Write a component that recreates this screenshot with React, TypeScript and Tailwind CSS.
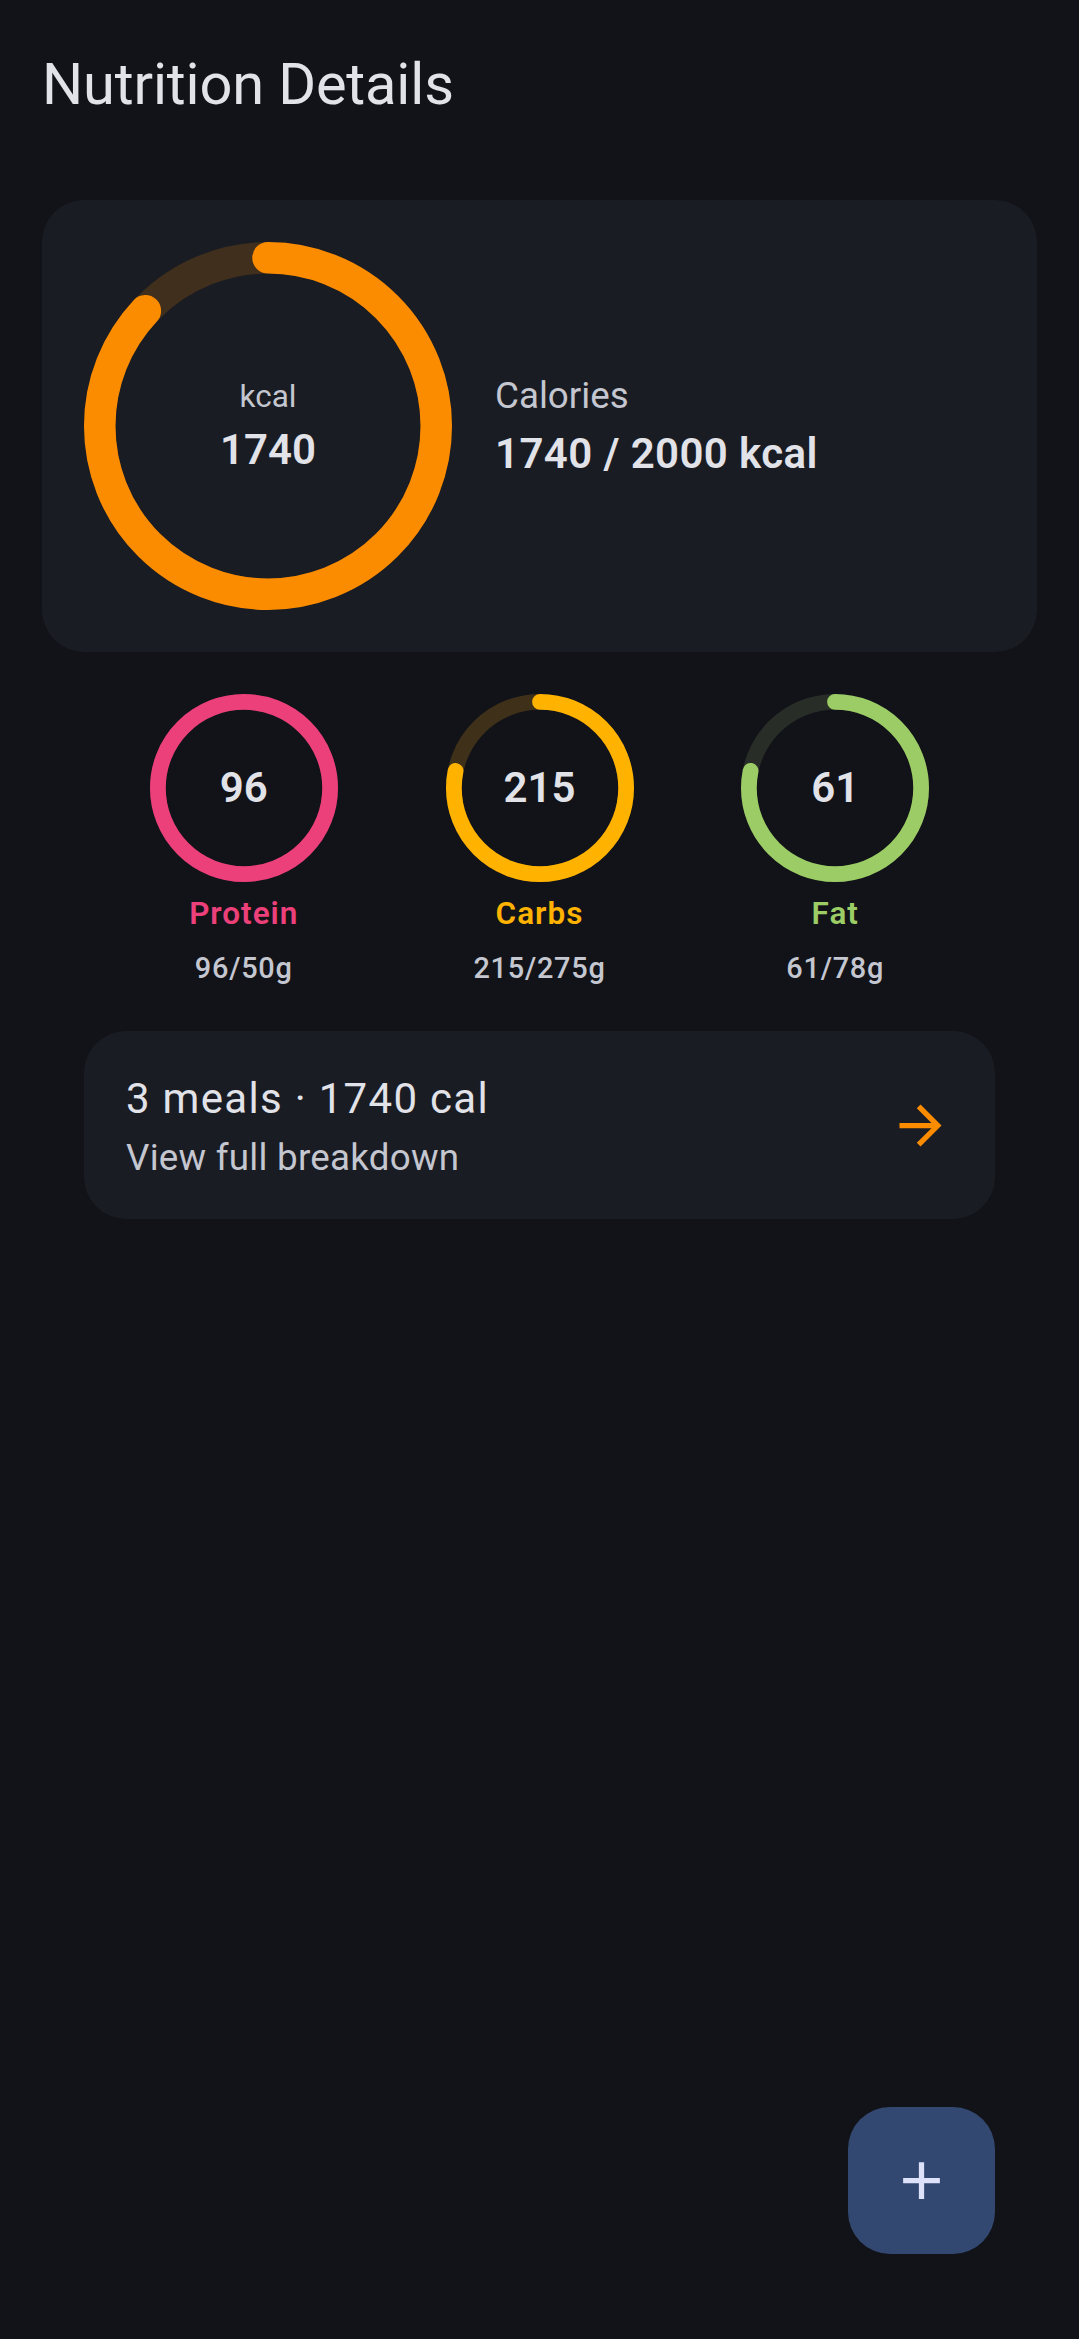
import React from "react";

type RingProps = {
  size: number;
  stroke: number;
  progress: number;
  color: string;
  track: string;
  children?: React.ReactNode;
};

function Ring({ size, stroke, progress, color, track, children }: RingProps) {
  const r = (size - stroke) / 2;
  const p = Math.min(progress, 1);
  return (
    <div className="relative shrink-0" style={{ width: size, height: size }}>
      <svg width={size} height={size} viewBox={`0 0 ${size} ${size}`} className="-rotate-90">
        <circle cx={size / 2} cy={size / 2} r={r} fill="none" stroke={track} strokeWidth={stroke} />
        <circle
          cx={size / 2}
          cy={size / 2}
          r={r}
          fill="none"
          stroke={color}
          strokeWidth={stroke}
          strokeLinecap={p >= 1 ? "butt" : "round"}
          pathLength={100}
          strokeDasharray={`${p * 100} 100`}
        />
      </svg>
      <div className="absolute inset-0 flex flex-col items-center justify-center">{children}</div>
    </div>
  );
}

const macros = [
  { name: "Protein", value: 96, goal: 50, color: "#ec407a", track: "#3f1f2c", text: "text-[#ec407a]" },
  { name: "Carbs", value: 215, goal: 275, color: "#ffb300", track: "#3f3019", text: "text-[#ffb300]" },
  { name: "Fat", value: 61, goal: 78, color: "#9ccc65", track: "#282d28", text: "text-[#9ccc65]" },
];

export default function App() {
  return (
    <div className="min-h-[2339px] bg-[#111318] text-[#e2e2e9] font-['Roboto',sans-serif] relative">
      {/* Title */}
      <h1 className="pt-[50px] pl-[42px] text-[57.75px] leading-[68px] tracking-[-0.15px] font-normal text-[#e2e2e9]">
        Nutrition Details
      </h1>

      {/* Calories card */}
      <div className="mx-[42px] mt-[82px] rounded-[42px] bg-[#1a1c23] p-[42px] flex items-center gap-[43px]">
        <Ring size={368} stroke={31.5} progress={1740 / 2000} color="#fb8c00" track="#3f2f1c">
          <span className="text-[31.5px] leading-[38px] text-[#c4c6d0]">kcal</span>
          <span className="mt-[9px] text-[42px] leading-[50px] font-semibold text-[#e2e2e9]">1740</span>
        </Ring>
        <div className="flex flex-col">
          <span className="text-[36.75px] leading-[44px] text-[#c4c6d0]">Calories</span>
          <span className="mt-[11px] text-[42px] leading-[50px] tracking-[0.4px] font-semibold text-[#e2e2e9]">
            1740 / 2000 kcal
          </span>
        </div>
      </div>

      {/* Macro rings */}
      <div className="mx-[42px] mt-[42px] flex justify-evenly">
        {macros.map((m) => (
          <div key={m.name} className="w-[188px] flex flex-col items-center">
            <Ring size={188} stroke={15.75} progress={m.value / m.goal} color={m.color} track={m.track}>
              <span className="text-[42px] leading-[50px] font-semibold text-[#e2e2e9]">{m.value}</span>
            </Ring>
            <span className={`mt-[13px] text-[31.5px] leading-[38px] tracking-[1px] font-semibold ${m.text}`}>
              {m.name}
            </span>
            <span className="mt-[18px] text-[28.9px] leading-[34px] tracking-[0.75px] font-medium text-[#c4c6d0]">
              {m.value}/{m.goal}g
            </span>
          </div>
        ))}
      </div>

      {/* Meals summary */}
      <div className="mx-[84px] mt-[46px] h-[188px] rounded-[42px] bg-[#1a1c23] pl-[42px] pr-[43px] flex items-center justify-between">
        <div className="flex flex-col pt-[4px]">
          <span className="text-[42px] leading-[50px] tracking-[1.3px] text-[#e2e2e9]">3 meals · 1740 cal</span>
          <span className="mt-[12px] text-[36.75px] leading-[44px] tracking-[0.25px] text-[#c4c6d0]">
            View full breakdown
          </span>
        </div>
        <svg width="63" height="63" viewBox="0 0 24 24" fill="#fb8c00">
          <path d="M12 4l-1.41 1.41L16.17 11H4v2h12.17l-5.58 5.59L12 20l8-8z" />
        </svg>
      </div>

      {/* FAB */}
      <button className="absolute right-[84px] bottom-[85px] w-[147px] h-[147px] rounded-[42px] bg-[#334870] flex items-center justify-center">
        <svg width="63" height="63" viewBox="0 0 24 24" fill="#dde1f9">
          <path d="M19 13h-6v6h-2v-6H5v-2h6V5h2v6h6v2z" />
        </svg>
      </button>
    </div>
  );
}
